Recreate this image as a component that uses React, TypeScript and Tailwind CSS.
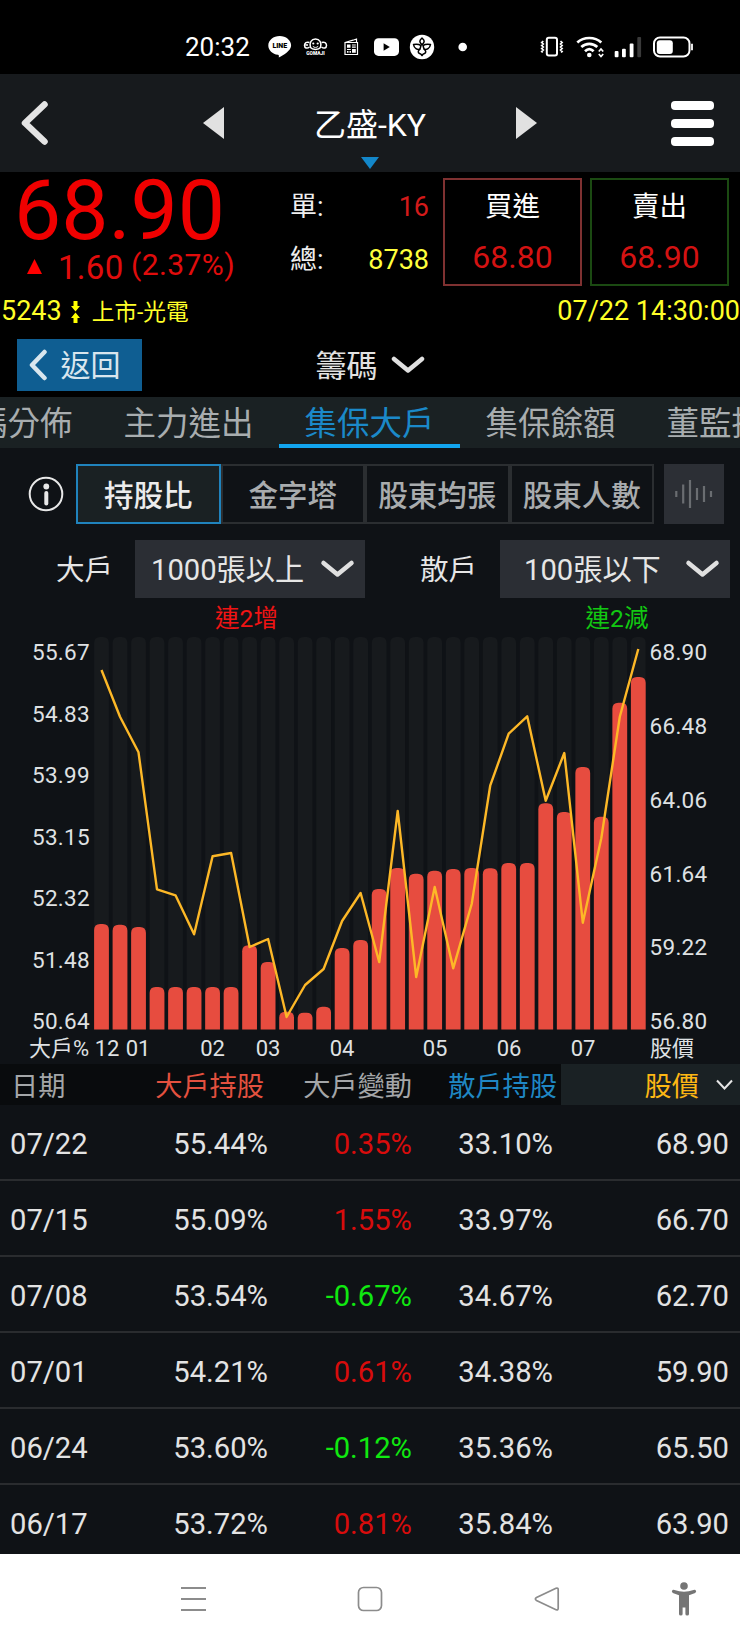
import type { ReactNode } from "react"

const CHART_STEP = 18.51
const CHART_X0 = 101.5
const CHART_TOP = 637
const CHART_BOTTOM = 1029.5

const barTops = [
  924, 924.7, 927, 987, 987, 987, 987, 987, 945.3, 962, 1011.7, 1012.7, 1006.7, 948, 940,
  889, 868, 873.7, 870.7, 869, 868, 868.3, 863, 863, 803.3, 812, 767, 816.7, 702.7, 677,
]

const priceLine = [
  670, 716.7, 752.3, 889.3, 895.3, 934.3, 856.3, 853, 947, 939, 1017, 985, 969, 921, 893,
  962, 811, 977, 887, 968.3, 904, 785.7, 733.7, 716.3, 800.7, 753, 922.7, 838.3, 716.7, 649,
]

const leftAxis = ["55.67", "54.83", "53.99", "53.15", "52.32", "51.48", "50.64"]
const rightAxis = ["68.90", "66.48", "64.06", "61.64", "59.22", "56.80"]

const months = [
  { label: "12", x: 107 },
  { label: "01", x: 138 },
  { label: "02", x: 212.5 },
  { label: "03", x: 268 },
  { label: "04", x: 342 },
  { label: "05", x: 435 },
  { label: "06", x: 509 },
  { label: "07", x: 583 },
]

const rows = [
  { date: "07/22", big: "55.44%", diff: "0.35%", small: "33.10%", price: "68.90" },
  { date: "07/15", big: "55.09%", diff: "1.55%", small: "33.97%", price: "66.70" },
  { date: "07/08", big: "53.54%", diff: "-0.67%", small: "34.67%", price: "62.70" },
  { date: "07/01", big: "54.21%", diff: "0.61%", small: "34.38%", price: "59.90" },
  { date: "06/24", big: "53.60%", diff: "-0.12%", small: "35.36%", price: "65.50" },
  { date: "06/17", big: "53.72%", diff: "0.81%", small: "35.84%", price: "63.90" },
]

const tabs = ["籌碼分佈", "主力進出", "集保大戶", "集保餘額", "董監持股"]
const modes = ["持股比", "金字塔", "股東均張", "股東人數"]

function StatusBar() {
  return (
    <div className="flex h-[74px] items-center bg-black pl-[185px] pt-[19px] text-white">
      <span className="w-[82px] text-[26px] leading-none">20:32</span>
      <svg className="h-[28px] w-[205px]" viewBox="267 33 205 28" fill="#fff">
        {/* LINE */}
        <path d="M279.7 36c-6.300 0-11.400 4.200-11.400 9.400 0 4.700 4.100 8.600 9.700 9.300.9.200 1 .7.800 2.700 5-2.600 12.300-6.900 12.300-12 0-5.200-5.100-9.400-11.400-9.400z" />
        <text x="279.800" y="48.300" textAnchor="middle" fontSize="7" fontWeight="900" fill="#000">LINE</text>
        {/* Gomaji */}
        <g fill="none" stroke="#fff" strokeWidth="1.500">
          <path d="M310.500 47.500c-1.500-5 1-8.500 5-8.500s6.500 3.500 5 8.500c-2 2.500-8 2.500-10 0z" />
          <path d="M309.500 42.500c-3-1-5 .5-5 3s2.500 3.500 5 1.500M321.500 42.500c3-1 5 .5 5 3s-2.500 3.500-5 1.500M305.500 45h2.500" />
          <path d="M312.800 46.300c1.500 1.500 3.900 1.500 5.400 0" strokeWidth="1" />
        </g>
        <circle cx="313.300" cy="43.500" r="1.100" />
        <circle cx="317.700" cy="43.500" r="1.100" />
        <text x="315.500" y="55" textAnchor="middle" fontSize="4.900" fontWeight="900">GOMAJI</text>
        {/* newspaper */}
        <path d="M345 42.500l8-2.300 3.500-1.200v3M345 42.500h12.500v12H345z" fill="none" stroke="#fff" strokeWidth="1.200" />
        <path d="M347 44.500h3.500v3.300H347zM352 44.500h3.800v1H352zM352 46.500h3.800v1.200H352zM347 49h3.800v1H347zM347 51h1.500v1.800H347zM349.500 51h1.500v1.800h-1.500zM352 49h3.800v3.800H352z" />
        {/* YouTube */}
        <rect x="374" y="38.300" width="25" height="17.600" rx="4.500" />
        <path d="M383.600 43.300l6.200 3.700-6.200 3.700z" fill="#000" />
        {/* flower badge */}
        <circle cx="422" cy="47" r="12.200" />
        <g fill="none" stroke="#000" strokeWidth="1.500" strokeLinejoin="round">
          <path d="M422 44.800c-3-2.500-2.800-4.500 0-6.800 2.800 2.300 3 4.300 0 6.800z" />
          <path d="M421 45.500c-2-1.300-5-1.500-7.500-1 .5 3.500 4 6 6.500 4.500zM423 45.500c2-1.300 5-1.500 7.500-1-.5 3.500-4 6-6.500 4.500z" />
          <path d="M420 49c-2.500 2-2 3.800-.5 4.500 1 .2 1.800.8 2.500 2 .7-1.200 1.500-1.800 2.500-2 1.500-.7 2-2.500-.5-4.500" />
        </g>
        <circle cx="462.700" cy="47" r="4.300" />
      </svg>
      <svg className="ml-[66px] h-[28px] w-[160px]" viewBox="538 33 160 28" fill="none" stroke="#fff">
        {/* vibrate */}
        <rect x="546.800" y="37.800" width="10.200" height="17.800" rx="2" strokeWidth="2" />
        <path d="M543.300 41l-1.600 1.500 1.600 1.500-1.600 1.500 1.600 1.500-1.600 1.500 1.600 1.500-1.600 1.500 1 1M560.500 41l1.600 1.500-1.600 1.500 1.600 1.500-1.600 1.500 1.600 1.500-1.600 1.500 1.600 1.500-1 1" strokeWidth="1.700" />
        {/* wifi */}
        <g strokeWidth="2.700">
          <path d="M577.300 42.500c6.500-6 17.500-6 24 0M581.300 47c4.500-4.200 11.500-4.200 16 0M585 51.300c2.700-2.600 6-2.600 8.600 0" />
        </g>
        <circle cx="589.300" cy="55" r="2.300" fill="#fff" stroke="none" />
        <path d="M598.800 51.500l2.200-2.500 2.200 2.500M598.800 54l2.200 2.500 2.200-2.500" strokeWidth="1.700" />
        {/* signal */}
        <g fill="#fff" stroke="none">
          <rect x="614.700" y="51" width="3.800" height="6.300" rx="1" />
          <rect x="622" y="48.700" width="3.800" height="8.600" rx="1" />
          <rect x="629.700" y="43.500" width="3.800" height="13.800" rx="1" />
          <rect x="637.300" y="37" width="3.800" height="20.300" rx="1" fill="#3a3a3a" />
        </g>
        {/* battery */}
        <rect x="654" y="37.500" width="35.500" height="19" rx="6" strokeWidth="2" />
        <rect x="656.800" y="40.200" width="16" height="13.700" rx="3" fill="#fff" stroke="none" />
        <path d="M692 43.800v6.500" strokeWidth="1.800" />
      </svg>
    </div>
  )
}

function Header() {
  return (
    <header className="relative flex h-[98px] items-center bg-[#171a1d] pl-[20px] text-white">
      <svg className="h-[46px] w-[30px]" viewBox="0 0 30 46" fill="none" stroke="#e4e4e4" strokeWidth="6.500" strokeLinecap="round" strokeLinejoin="round">
        <path d="M24.500 4.500L5 23l19.500 18.500" />
      </svg>
      <svg className="ml-[153px] h-[32px] w-[21px]" viewBox="0 0 21 32" fill="#e1e1e1">
        <path d="M21 0v32L0 16z" />
      </svg>
      <h1 className="ml-[60px] w-[172px] whitespace-nowrap pt-[4px] text-center text-[32px] leading-none">乙盛-KY</h1>
      <svg className="ml-[60px] h-[32px] w-[21px]" viewBox="0 0 21 32" fill="#e1e1e1">
        <path d="M0 0v32l21-16z" />
      </svg>
      <div className="ml-auto mr-[26px] flex w-[43px] flex-col gap-[9px]">
        <span className="h-[9px] rounded-[4px] bg-white" />
        <span className="h-[9px] rounded-[4px] bg-white" />
        <span className="h-[9px] rounded-[4px] bg-white" />
      </div>
      <svg className="absolute left-[361px] top-[83px] h-[12px] w-[18px]" viewBox="0 0 18 12" fill="#1387c9">
        <path d="M0 0h18L9 12z" />
      </svg>
    </header>
  )
}

function OrderBox({ label, price, className }: { label: string; price: string; className: string }) {
  return (
    <div className={`flex h-[108px] w-[139px] flex-col items-center border-2 ${className}`}>
      <span className="h-[50px] text-[27.500px] leading-[53px] text-white">{label}</span>
      <span className="h-[52px] text-[32px] leading-[54px] text-[#d31212]">{price}</span>
    </div>
  )
}

function Quote() {
  return (
    <section className="h-[225px] bg-black">
      <div className="flex h-[117px]">
        <div className="w-[290px] text-[#f00000]">
          <div className="h-[74px] pl-[14px] text-[84px] leading-[77px]">68.90</div>
          <div className="flex h-[42px] items-center pl-[27px] text-[#e00c0c]">
            <svg className="-mt-[1px] h-[15px] w-[15px]" viewBox="0 0 15 15" fill="#f00">
              <path d="M7.500 0L15 15H0z" />
            </svg>
            <span className="ml-[16px] w-[73px] text-[33px] leading-none tracking-[0.3px]">1.60</span>
            <span className="-mt-[5px] text-[30px] leading-none tracking-[0.4px]">(2.37%)</span>
          </div>
        </div>
        <div className="w-[139px] pt-[8px] text-[27px]">
          <div className="flex justify-between leading-[54px]">
            <span className="text-[#eee]">單:</span>
            <span className="text-[#d31a1a]">16</span>
          </div>
          <div className="flex justify-between leading-[52px]">
            <span className="text-[#eee]">總:</span>
            <span className="text-[#ffff3c]">8738</span>
          </div>
        </div>
        <div className="flex gap-[8px] pl-[14px] pt-[6px]">
          <OrderBox label="買進" price="68.80" className="border-[#7f3131]" />
          <OrderBox label="賣出" price="68.90" className="border-[#1b4a12]" />
        </div>
      </div>
      <div className="flex h-[43px] items-center pt-[2px] text-[27px] leading-none text-[#ffff28]">
        <span className="pl-[1px]">5243</span>
        <svg className="ml-[9px] h-[22px] w-[9px]" viewBox="0 0 9 22" fill="#ffff00">
          <path d="M2.500 0h4v5H9L4.500 10.500 0 5h2.500zM2.500 22h4v-5H9l-4.500-5.500L0 17h2.500z" />
        </svg>
        <span className="ml-[12px] mt-[3px] text-[22.700px]">上市-光電</span>
        <span className="ml-auto">07/22 14:30:00</span>
      </div>
      <div className="flex items-center pl-[16.500px] pt-[7px] text-[31px] leading-none">
        <button className="flex h-[52px] w-[125px] items-center bg-[#0f5e92] pl-[12px] text-[#d9e6ee]">
          <svg className="h-[32px] w-[19px]" viewBox="0 0 19 32" fill="none" stroke="currentColor" strokeWidth="4.500" strokeLinecap="round" strokeLinejoin="round">
            <path d="M15.500 3L3 16l12.500 13" />
          </svg>
          <span className="ml-[13px] pt-[2px] text-[30px]">返回</span>
        </button>
        <div className="ml-[174px] flex items-center text-[#e2e2e2]">
          <span className="pt-[3px]">籌碼</span>
          <Chevron className="ml-[13px] h-[20px] w-[34px]" />
        </div>
      </div>
    </section>
  )
}

function Chevron({ className }: { className: string }) {
  return (
    <svg className={className} viewBox="0 0 34 20" fill="none" stroke="#e0e0e0" strokeWidth="4.500" strokeLinecap="round" strokeLinejoin="round">
      <path d="M3 4l14 11.500L31 4" />
    </svg>
  )
}

function Tabs() {
  return (
    <nav className="flex h-[51px] overflow-hidden bg-[#1a2123] text-[32.500px] leading-[55px] text-[#a8adaf]">
      <div className="-ml-[83px] flex shrink-0">
        {tabs.map((t) => (
          <div
            key={t}
            className={`h-[51px] w-[181px] shrink-0 whitespace-nowrap text-center ${
              t === "集保大戶" ? "border-b-4 border-[#12a5ef] text-[#1b89c9]" : ""
            }`}
          >
            {t}
          </div>
        ))}
      </div>
    </nav>
  )
}

function Select({ children, className }: { children: ReactNode; className: string }) {
  return (
    <div className={`flex h-[58px] items-center justify-between bg-[#2b2e34] pr-[10px] text-[29.200px] text-[#e6e6e6] ${className}`}>
      <span className="pt-[3px]">{children}</span>
      <Chevron className="h-[20px] w-[35px]" />
    </div>
  )
}

function Filters() {
  return (
    <div className="h-[189px] text-[29.500px] leading-none">
      <div className="flex items-center pl-[28px] pt-[16px]">
        <svg className="h-[36px] w-[36px]" viewBox="0 0 36 36" fill="none" stroke="#e8e8e8">
          <circle cx="18" cy="18" r="16.300" strokeWidth="2" />
          <path d="M18.300 17v10.500" strokeWidth="4" strokeLinecap="round" />
          <circle cx="18.300" cy="10.500" r="2.900" fill="#e8e8e8" stroke="none" />
        </svg>
        <div className="ml-[12px] grid w-[578px] grid-cols-4">
          {modes.map((m, i) => (
            <button
              key={m}
              className={`h-[60px] border-2 pt-[6px] font-medium ${
                i === 0 ? "border-[#2083bd] bg-[#1a2123] text-[#ececec]" : "border-[#2b2e31] text-[#a9acae]"
              }`}
            >
              {m}
            </button>
          ))}
        </div>
        <button className="ml-[10px] flex h-[60px] w-[60px] items-center justify-center bg-[#2c2f35]">
          <svg className="h-[28px] w-[40px]" viewBox="0 0 40 28" stroke="#6a6d71" strokeWidth="2.200">
            <path d="M2.300 11v6M9.200 4.500v19M16 0v28M23 8v12M30 6v16M37 11v6" />
          </svg>
        </button>
      </div>
      <div className="flex items-center pl-[56px] pt-[16px] text-[28.500px] text-[#e6e6e6]">
        <span className="w-[79px] pt-[4px]">大戶</span>
        <Select className="w-[230px] pl-[16px]">1000張以上</Select>
        <span className="ml-[55px] w-[80px] pt-[4px]">散戶</span>
        <Select className="w-[230px] pl-[24px]">100張以下</Select>
      </div>
      <div className="flex pl-[135px] text-center text-[24.500px] leading-[41px]">
        <span className="w-[223px] text-[#f01414]">連2增</span>
        <span className="ml-[146px] w-[226px] text-[#12c812]">連2減</span>
      </div>
    </div>
  )
}

function HoldingChart() {
  const points = priceLine.map((y, i) => `${(CHART_X0 + i * CHART_STEP).toFixed(1)},${y}`).join(" ")
  return (
    <svg className="block h-[427px] w-[740px]" viewBox="0 637 740 427" fill="#dfe1e3" fontSize="22.500">
      {barTops.map((top, i) => {
        const x = CHART_X0 - 7.4 + i * CHART_STEP
        return (
          <g key={i}>
            <path
              d={`M${x} ${CHART_BOTTOM}V${CHART_TOP + 6}q0-6 6-6h2.800q6 0 6 6V${CHART_BOTTOM}z`}
              fill="#171a1d"
            />
            <path d={`M${x} ${CHART_BOTTOM}V${top + 6}q0-6 6-6h2.800q6 0 6 6V${CHART_BOTTOM}z`} fill="#e74c3f" />
          </g>
        )
      })}
      <polyline points={points} fill="none" stroke="#fdb827" strokeWidth="2.400" strokeLinejoin="round" />
      {leftAxis.map((v, i) => (
        <text key={v} x="90" y={660.2 + i * 61.5} textAnchor="end" letterSpacing="0.300">{v}</text>
      ))}
      {rightAxis.map((v, i) => (
        <text key={v} x="649.500" y={660.2 + i * 73.8} letterSpacing="0.300">{v}</text>
      ))}
      {months.map((m) => (
        <text key={m.label} x={m.x} y="1055.500" textAnchor="middle" fontSize="22">{m.label}</text>
      ))}
      <text x="29" y="1055.500" fontSize="22">大戶%</text>
      <text x="650" y="1055.500" fontSize="22">股價</text>
    </svg>
  )
}

const cols = "grid grid-cols-[130px_138px_144px_149px_179px]"

function HoldingTable() {
  return (
    <div className="h-[490px] overflow-hidden">
      <div className={`${cols} h-[41px] bg-[#090b0d] text-[27.200px] leading-[46px] text-[#a4a6a8]`}>
        <span className="h-[41px] pl-[11px]">日期</span>
        <span className="h-[41px] pr-[4px] text-right text-[#e4513f]">大戶持股</span>
        <span className="h-[41px] text-right">大戶變動</span>
        <span className="h-[41px] pr-[4px] text-right text-[#1f87c4]">散戶持股</span>
        <span className="flex h-[41px] justify-end bg-[#1a2124] pr-[7px] text-[#fdb714]">
          股價
          <svg className="ml-[17px] mt-[15px] h-[12px] w-[17px]" viewBox="0 0 17 12" fill="none" stroke="#e6e6e6" strokeWidth="2">
            <path d="M1 1.500l7.500 8 7.500-8" />
          </svg>
        </span>
      </div>
      {rows.map((r) => (
        <div key={r.date} className={`${cols} h-[76px] border-b-2 border-[#2a2c2f] text-[29.200px] leading-[78px] text-[#e3e3e3]`}>
          <span className="h-[74px] pl-[10px]">{r.date}</span>
          <span className="h-[74px] text-right">{r.big}</span>
          <span className={`h-[74px] text-right ${r.diff.startsWith("-") ? "text-[#10e810]" : "text-[#d80c0c]"}`}>{r.diff}</span>
          <span className="h-[74px] pr-[8px] text-right">{r.small}</span>
          <span className="h-[74px] pr-[11px] text-right">{r.price}</span>
        </div>
      ))}
    </div>
  )
}

function NavBar() {
  return (
    <div className="flex h-[90px] items-center bg-white pl-[181px]">
      <svg className="h-[26px] w-[25px]" viewBox="0 0 25 26" stroke="#8c8c8c" strokeWidth="2">
        <path d="M0 2h25M0 13h25M0 24h25" />
      </svg>
      <svg className="ml-[151px] h-[26px] w-[26px]" viewBox="0 0 26 26" fill="none" stroke="#8c8c8c" strokeWidth="1.700">
        <rect x="1.500" y="1.500" width="23" height="23" rx="5" />
      </svg>
      <svg className="ml-[151px] h-[26px] w-[26px]" viewBox="0 0 26 26" fill="none" stroke="#8c8c8c" strokeWidth="1.700">
        <path d="M22 2.200L2.500 11.600q-2.300 1.400 0 2.800L22 23.800q2.200.6 2.200-1.500V3.700q0-2.100-2.200-1.500z" />
      </svg>
      <svg className="ml-[111px] h-[34px] w-[26px]" viewBox="0 0 26 34" fill="#757575">
        <circle cx="13" cy="4" r="3.800" />
        <path d="M1.500 8q-1.500 1.500.3 3L8 13.300V32q0 1.500 1.800 1.500t1.800-1.500v-6.500h2.800V32q0 1.500 1.800 1.500T18 32V13.300l6.200-2.300q1.800-1.500.3-3-.8-.7-2 0-9.500 3.400-19 0-1.200-.7-2 0z" />
      </svg>
    </div>
  )
}

export default function App() {
  return (
    <div className="h-[1644px] w-[740px] overflow-hidden bg-[#0f1216] font-['Roboto','Noto_Sans_CJK_TC',sans-serif]">
      <StatusBar />
      <Header />
      <Quote />
      <Tabs />
      <Filters />
      <HoldingChart />
      <HoldingTable />
      <NavBar />
    </div>
  )
}
